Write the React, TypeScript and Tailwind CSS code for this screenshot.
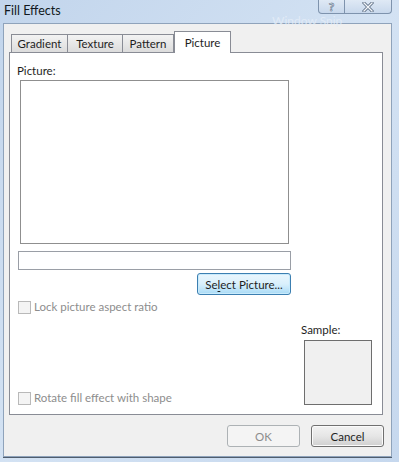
import React from 'react';

const font = "font-['Segoe_UI','Lato',sans-serif]";

const TABS = ['Gradient', 'Texture', 'Pattern', 'Picture'];
const TAB_WIDTHS: Record<string, string> = {
  Gradient: 'w-[57px]',
  Texture: 'w-[56px]',
  Pattern: 'w-[52px]',
  Picture: 'w-[57px]',
};

const Checkbox: React.FC<{ label: string }> = ({ label }) => (
  <div className="flex items-center gap-[3px]">
    <span className="w-[13px] h-[13px] border border-[#b9b9b9] bg-[#f4f4f4]" />
    <span className="text-[#8d8d8d] leading-[14px]">{label}</span>
  </div>
);

const Tab: React.FC<{ label: string; active?: boolean }> = ({ label, active }) =>
  active ? (
    <div
      className={`${TAB_WIDTHS[label]} h-[22px] -mb-px relative z-10 bg-white border border-[#898c95] border-b-0 flex justify-center pt-[3px] text-[#1e1e1e]`}
    >
      {label}
    </div>
  ) : (
    <div
      className={`${TAB_WIDTHS[label]} h-[18px] bg-gradient-to-b from-[#f3f3f3] to-[#dcdcdc] border border-[#898c95] border-b-0 -ml-px first:ml-0 flex justify-center pt-[1px] text-[#1e1e1e]`}
    >
      {label}
    </div>
  );

export default function App() {
  return (
    <div
      className={`${font} text-[11.5px] leading-[15px] w-[399px] h-[462px] overflow-hidden relative flex flex-col bg-gradient-to-br from-[#c2d5ec] via-[#d3e2f3] to-[#c6d8ee]`}
    >
      {/* title bar */}
      <div className="h-[23px] flex items-start shrink-0">
        <span className="pl-[4px] pt-[3px] text-[12.5px] text-[#101820]">Fill Effects</span>
        <div className="ml-auto mr-[7px] flex">
          <div className="w-[27px] h-[14px] border border-t-0 border-[#7e93ad] rounded-bl-[4px] bg-gradient-to-b from-[#dfe9f5] to-[#c8d8ec] flex justify-center items-center">
            <span className="text-[12px] leading-[12px] font-bold text-[#f6f9fc] [-webkit-text-stroke:0.6px_#55677f]">?</span>
          </div>
          <div className="w-[47px] h-[14px] border border-t-0 border-l-0 border-[#7e93ad] rounded-br-[4px] bg-gradient-to-b from-[#dfe9f5] to-[#c8d8ec] flex justify-center items-center">
            <svg width="12" height="10" viewBox="0 0 12 10">
              <path d="M2 1 L10 9 M10 1 L2 9" stroke="#56687f" strokeWidth="3" strokeLinecap="square" />
              <path d="M2 1 L10 9 M10 1 L2 9" stroke="#f4f7fb" strokeWidth="1.4" strokeLinecap="square" />
            </svg>
          </div>
        </div>
      </div>
      <span className="absolute left-[272px] top-[16px] text-[12px] leading-[9px] text-[#e6eef8] opacity-80">Window Snip</span>

      {/* client area */}
      <div className="ml-[3px] mr-[7px] mb-[5px] flex-1 bg-[#f0f0f0] border border-[#8fa3bb] shadow-[0_1px_0_#4f5d6e] flex flex-col pl-[5px] pr-[8px] pt-[7px]">
        <div className="flex items-end pl-[2px]">
          {TABS.map((t) => (
            <Tab key={t} label={t} active={t === 'Picture'} />
          ))}
        </div>

        <div className="h-[363px] bg-white border border-[#898c95] flex flex-col pb-[9px]">
          <span className="ml-[7px] mt-[10px] text-[#1e1e1e]">Picture:</span>
          <div className="ml-[10px] mt-[2px] w-[269px] h-[164px] border border-[#8f8f8f] bg-white" />
          <div className="ml-[8px] mt-[7px] w-[273px] h-[19px] border border-[#9a9ea6] bg-white" />
          <div className="ml-[8px] w-[273px] flex justify-end mt-[3px]">
            <button className="w-[94px] h-[22px] rounded-[3px] border border-[#3c7fb1] bg-gradient-to-b from-[#eaf6fd] via-[#d9f0fc] to-[#a9dbf6] text-[#1e1e1e] shadow-[inset_0_0_0_1px_#c9ebfc]">
              Se<span className="underline decoration-1 underline-offset-2">l</span>ect Picture...
            </button>
          </div>
          <div className="ml-[8px] mt-[5px]">
            <Checkbox label="Lock picture aspect ratio" />
          </div>
          <div className="flex-1 flex items-end">
            <div className="ml-[8px]">
              <Checkbox label="Rotate fill effect with shape" />
            </div>
            <div className="ml-auto mr-[10px] flex flex-col">
              <span className="-ml-[3px] text-[#1e1e1e] mb-[3px]">Sample:</span>
              <div className="w-[68px] h-[65px] border border-[#6e6e6e] bg-[#f0f0f0]" />
            </div>
          </div>
        </div>

        <div className="flex justify-end gap-[11px] mt-[10px] -mr-[1px]">
          <button className="w-[73px] h-[22px] rounded-[3px] border border-[#adb2b5] bg-[#f4f4f4] text-[#8c8c8c]">
            OK
          </button>
          <button className="w-[73px] h-[22px] rounded-[3px] border border-[#707070] bg-gradient-to-b from-[#f2f2f2] via-[#e6e6e6] to-[#cfcfcf] text-[#1e1e1e] shadow-[inset_0_0_0_1px_#fbfbfb]">
            Cancel
          </button>
        </div>
      </div>
    </div>
  );
}
